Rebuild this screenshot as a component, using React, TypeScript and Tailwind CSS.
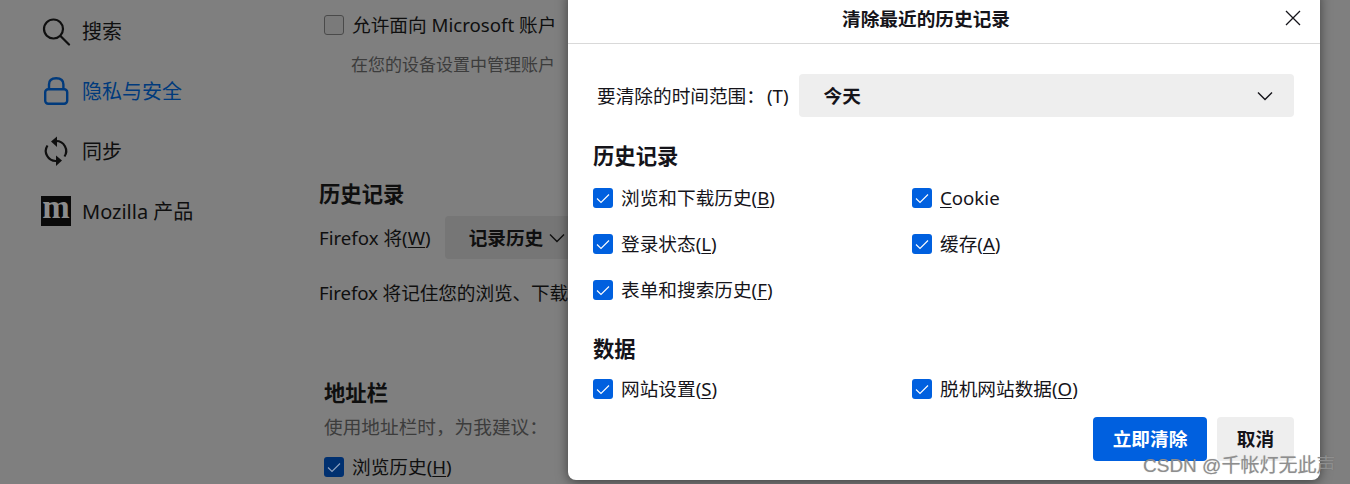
import React from "react";

const font = { fontFamily: '"Noto Sans", "Noto Sans CJK SC", sans-serif' };

function Box({ dim = false }: { dim?: boolean }) {
  return (
    <span className={`flex w-5 h-5 shrink-0 rounded-[3px] ${dim ? "bg-[#003070]" : "bg-[#0060df]"}`}>
      <svg viewBox="0 0 20 20" className="w-5 h-5" fill="none" stroke={dim ? "#8fa3c0" : "#ffffff"} strokeWidth="1.1">
        <path d="M4 10.5 L8 14.5 L16 6.5" />
      </svg>
    </span>
  );
}

function Acc({ children }: { children: React.ReactNode }) {
  return <span className="underline underline-offset-2">{children}</span>;
}

function DlgCheck({ label, k }: { label: string; k: string }) {
  return (
    <div className="flex items-center gap-2 h-6">
      <Box />
      <span className="text-[18.67px] text-[#15141a] leading-6 whitespace-nowrap">
        {label}(<Acc>{k}</Acc>)
      </span>
    </div>
  );
}

function NavRow({ icon, label, active = false }: { icon: React.ReactNode; label: string; active?: boolean }) {
  return (
    <div className={`flex items-center h-[60px] pl-[41px] gap-[11px] text-[20px] ${active ? "text-[#003a7c]" : "text-[#0f0f0f]"}`}>
      <span className="flex w-[30px] h-[30px] shrink-0 items-center justify-center">{icon}</span>
      <span className="whitespace-nowrap pt-[1px]">{label}</span>
    </div>
  );
}

export default function App() {
  return (
    <div style={font} className="relative w-[1350px] h-[484px] overflow-hidden bg-[#7f7f7f]">
      <div className="flex h-full">
        <nav className="w-[319px] shrink-0 pt-[1px]">
          <NavRow
            label="搜索"
            icon={
              <svg viewBox="0 0 30 30" className="w-[30px] h-[30px]" fill="none" stroke="#0f0f0f" strokeWidth="2.2">
                <circle cx="12.500" cy="13" r="9.500" />
                <path d="M19.500 20 L28 28.500" strokeLinecap="round" />
              </svg>
            }
          />
          <NavRow
            active
            label="隐私与安全"
            icon={
              <svg viewBox="0 0 30 30" className="w-[30px] h-[30px]" fill="none" stroke="#003a7c" strokeWidth="2.4">
                <rect x="4.200" y="13.200" width="22" height="14.500" rx="3" />
                <path d="M8 13 V8.500 C8 4.500 10.800 2.200 15.200 2.200 C19.600 2.200 22.400 4.500 22.400 8.500 V13" />
              </svg>
            }
          />
          <NavRow
            label="同步"
            icon={
              <svg viewBox="0 0 30 30" className="w-[30px] h-[30px]" fill="#0f0f0f" stroke="none">
                <path d="M15 5 A10 10 0 0 1 23.500 20.500" fill="none" stroke="#0f0f0f" strokeWidth="2.2" />
                <path d="M15 25 A10 10 0 0 1 6.500 9.500" fill="none" stroke="#0f0f0f" strokeWidth="2.2" />
                <path d="M16 0.500 L16 11 L10 5.500 Z" />
                <path d="M15 19.500 L15 30 L21 24.500 Z" />
              </svg>
            }
          />
          <NavRow
            label="Mozilla 产品"
            icon={
              <span
                className="flex w-[30px] h-[30px] items-center justify-center bg-[#0a0a0a] text-[#8c8c8c] text-[33px] font-bold leading-none pb-[8px]"
                style={{ fontFamily: '"Liberation Serif", serif' }}
              >
                m
              </span>
            }
          />
        </nav>

        <main className="w-[249px] shrink-0 text-[18.67px] text-[#0f0f0f]">
          <div className="flex items-center gap-2 ml-[5px] mt-[13px] h-6">
            <span className="w-5 h-5 rounded-[3px] border border-[#4a4a4a] bg-[#7a7a7a]" />
            <span className="whitespace-nowrap">允许面向 Microsoft 账户</span>
          </div>
          <p className="ml-[32px] mt-[16px] h-6 leading-6 text-[17px] text-[#3c3c3c] whitespace-nowrap">在您的设备设置中管理账户</p>
          <h2 className="mt-[103px] h-7 leading-7 font-bold text-[21.33px]">历史记录</h2>
          <div className="flex items-center mt-[8px] h-[43px]">
            <span className="whitespace-nowrap">Firefox 将(<Acc>W</Acc>)</span>
            <span className="flex items-center gap-[6px] ml-[14px] h-[43px] w-[124px] shrink-0 pl-[24px] rounded-l-[4px] bg-[#767676] font-bold whitespace-nowrap">
              记录历史
              <svg viewBox="0 0 16 10" className="w-4 h-[10px] shrink-0" fill="none" stroke="#0f0f0f" strokeWidth="1.4">
                <path d="M1 1.500 L8 8.500 L15 1.500" />
              </svg>
            </span>
          </div>
          <p className="mt-[22px] h-6 leading-6 tracking-[-0.1px] whitespace-nowrap">Firefox 将记住您的浏览、下载</p>
          <h2 className="mt-[74px] ml-[5px] h-7 leading-7 font-bold text-[21.33px]">地址栏</h2>
          <p className="mt-[8px] ml-[5px] h-6 leading-6 text-[#3c3c3c] whitespace-nowrap">使用地址栏时{"\uFF0C"}为我建议{"\uFF1A"}</p>
          <div className="flex items-center gap-2 ml-[5px] mt-[16px] h-6">
            <Box dim />
            <span className="whitespace-nowrap">浏览历史(<Acc>H</Acc>)</span>
          </div>
        </main>
      </div>

      <div className="absolute left-[568px] top-[-8px] flex flex-col w-[752px] h-[488px] rounded-b-[8px] bg-white shadow-[0_2px_12px_rgba(0,0,0,0.5)] text-[#15141a]">
        <header className="relative flex items-center justify-center h-[52px] pt-[2px] pr-[36px] border-b border-[#d9d9d9]">
          <h1 className="text-[18.67px] font-bold leading-6 whitespace-nowrap">清除最近的历史记录</h1>
          <svg viewBox="0 0 16 16" className="absolute right-[19px] top-[18px] w-4 h-4" fill="none" stroke="#15141a" strokeWidth="1.3">
            <path d="M1 1 L15 15 M15 1 L1 15" />
          </svg>
        </header>
        <div className="flex flex-col flex-1 pl-[25px] pr-[26px]">
          <div className="flex items-center gap-[11px] mt-[30px] pl-[4px]">
            <span className="text-[18.67px] whitespace-nowrap">
              要清除的时间范围{"\uFF1A"}
              <span className="ml-[2px]">(T)</span>
            </span>
            <div className="flex flex-1 items-center justify-between h-[43px] rounded-[4px] bg-[#eeeeee] pl-[24px] pr-[21px]">
              <span className="text-[18.67px] font-bold">今天</span>
              <svg viewBox="0 0 16 10" className="w-4 h-[10px]" fill="none" stroke="#15141a" strokeWidth="1.4">
                <path d="M1 1.500 L8 8.500 L15 1.500" />
              </svg>
            </div>
          </div>
          <h2 className="mt-[25px] h-7 leading-7 font-bold text-[21.33px]">历史记录</h2>
          <div className="grid grid-cols-[319px_1fr] gap-y-[22px] mt-[16px]">
            <DlgCheck label="浏览和下载历史" k="B" />
            <div className="flex items-center gap-2 h-6">
              <Box />
              <span className="text-[18.67px] text-[#15141a] leading-6">
                <Acc>C</Acc>ookie
              </span>
            </div>
            <DlgCheck label="登录状态" k="L" />
            <DlgCheck label="缓存" k="A" />
            <DlgCheck label="表单和搜索历史" k="F" />
          </div>
          <h2 className="mt-[33px] h-7 leading-7 font-bold text-[21.33px]">数据</h2>
          <div className="grid grid-cols-[319px_1fr] mt-[14px]">
            <DlgCheck label="网站设置" k="S" />
            <DlgCheck label="脱机网站数据" k="O" />
          </div>
          <div className="flex justify-end gap-[10px] mt-[16px]">
            <button className="w-[114px] h-[44px] rounded-[4px] bg-[#0060df] text-white text-[18.67px] font-bold">立即清除</button>
            <button className="w-[77px] h-[44px] rounded-[4px] bg-[#eeeeee] text-[18.67px] font-bold">取消</button>
          </div>
        </div>
      </div>

      <span
        className="absolute left-[1143px] top-[455px] text-[19px] leading-[22px] text-[#8e8e8e] whitespace-nowrap [text-shadow:0_0_1px_rgba(60,60,60,0.3)]"
        style={{ fontFamily: '"Liberation Sans", "Noto Sans CJK SC", sans-serif' }}
      >
        CSDN @千帐灯无此声
      </span>
    </div>
  );
}
